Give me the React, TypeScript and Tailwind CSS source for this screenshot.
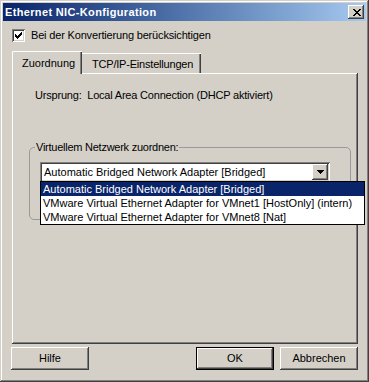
const raised =
  "shadow-[inset_-1px_-1px_#404040,inset_1px_1px_#ffffff,inset_-2px_-2px_#808080,inset_2px_2px_#d4d0c8]";
const sunken =
  "shadow-[inset_1px_1px_#808080,inset_-1px_-1px_#ffffff,inset_2px_2px_#404040,inset_-2px_-2px_#d4d0c8]";

// tiny pixel glyphs, like the classic Windows bitmaps
function Pix({ rows, color = "#000" }: { rows: string[]; color?: string }) {
  const w = rows[0].length;
  const h = rows.length;
  return (
    <svg width={w} height={h} viewBox={`0 0 ${w} ${h}`} shapeRendering="crispEdges">
      {rows.flatMap((r, y) =>
        r.split("").map((c, x) => (c === "X" ? <rect key={`${x}-${y}`} x={x} y={y} width={1} height={1} fill={color} /> : null))
      )}
    </svg>
  );
}

const closeX = ["XX....XX", ".XX..XX.", "..XXXX..", "...XX...", "..XXXX..", ".XX..XX.", "XX....XX"];
const check = ["......X", ".....XX", "X...XXX", "XX.XXX.", "XXXXX..", ".XXX...", "..X...."];
const arrow = ["XXXXXXX", ".XXXXX.", "..XXX..", "...X..."];

const adapters = [
  "Automatic Bridged Network Adapter [Bridged]",
  "VMware Virtual Ethernet Adapter for VMnet1 [HostOnly] (intern)",
  "VMware Virtual Ethernet Adapter for VMnet8 [Nat]",
];

function Button({ label, isDefault }: { label: string; isDefault?: boolean }) {
  if (isDefault) {
    return (
      <div className="w-[78px] h-[23px] border border-black">
        <div className={`w-full h-full flex items-center justify-center ${raised}`}>{label}</div>
      </div>
    );
  }
  return <div className={`w-[78px] h-[23px] flex items-center justify-center ${raised}`}>{label}</div>;
}

export default function App() {
  return (
    <div
      className={`w-[369px] h-[382px] bg-[#d4d0c8] p-[3px] text-[11px] leading-[13px] text-black font-['Liberation_Sans',Arial,sans-serif] shadow-[inset_-1px_-1px_#404040,inset_1px_1px_#d4d0c8,inset_-2px_-2px_#808080,inset_2px_2px_#ffffff]`}
    >
      {/* title bar */}
      <div className="h-[18px] flex items-center justify-between bg-gradient-to-r from-[#0a246a] to-[#a6caf0] pl-[2px] pr-[2px]">
        <span className="text-white font-bold tracking-[0.35px]">Ethernet NIC-Konfiguration</span>
        <div className={`w-[16px] h-[14px] bg-[#d4d0c8] flex items-center justify-center pl-[1px] ${raised}`}>
          <Pix rows={closeX} />
        </div>
      </div>

      {/* checkbox */}
      <div className="mt-[8px] ml-[9px] flex items-center gap-[6px] h-[13px]">
        <div className={`w-[13px] h-[13px] bg-white flex items-center justify-center ${sunken}`}>
          <Pix rows={check} />
        </div>
        <span className="tracking-[-0.17px]">Bei der Konvertierung berücksichtigen</span>
      </div>

      {/* tabs */}
      <div className="mt-[9px] ml-[9px] flex items-end h-[22px]">
        <div className="relative z-10 w-[70px] h-[23px] -mb-[1px] bg-[#d4d0c8] border-t border-l border-white rounded-tl-[2px] shadow-[inset_-1px_0_#404040,inset_-2px_0_#808080] pl-[9px] pt-[5px]">
          Zuordnung
        </div>
        <div className="w-[119px] h-[20px] border-t border-white shadow-[inset_-1px_0_#404040,inset_-2px_0_#808080] pl-[10px] pt-[4px] tracking-[-0.2px]">
          TCP/IP-Einstellungen
        </div>
      </div>

      {/* panel */}
      <div className={`relative ml-[9px] w-[346px] h-[271px] ${raised}`}>
        <div className="pt-[16px] pl-[23px] tracking-[-0.2px]">Ursprung:&nbsp; Local Area Connection (DHCP aktiviert)</div>

        {/* group box */}
        <div className="relative mt-[45px] ml-[17px] w-[322px] h-[73px] border border-[#9a9a9a] rounded-[5px]">
          <span className="absolute -top-[7px] left-[5px] px-[1px] bg-[#d4d0c8] tracking-[-0.25px]">
            Virtuellem Netzwerk zuordnen:
          </span>
          <div className={`relative mt-[14px] ml-[10px] w-[290px] h-[20px] bg-white p-[2px] flex ${sunken}`}>
            <div className="flex-1 pl-[2px] pt-[2px] whitespace-nowrap">{adapters[0]}</div>
            <div className={`w-[16px] h-[16px] bg-[#d4d0c8] flex items-center justify-center ${raised}`}>
              <Pix rows={arrow} />
            </div>

            {/* open dropdown */}
            <div className="absolute z-20 left-0 top-[19px] w-[325px] bg-white border border-black">
              {adapters.map((a, i) => (
                <div
                  key={a}
                  className={`h-[14px] pl-[2px] leading-[14px] whitespace-nowrap ${i === 0 ? "bg-[#0a246a] text-white" : ""}`}
                >
                  {a}
                </div>
              ))}
            </div>
          </div>
        </div>
      </div>

      {/* buttons */}
      <div className="mt-[3px] ml-[8px] mr-[8px] flex">
        <Button label="Hilfe" />
        <div className="flex-1" />
        <div className="flex gap-[6px]">
          <Button label="OK" isDefault />
          <Button label="Abbrechen" />
        </div>
      </div>
    </div>
  );
}
